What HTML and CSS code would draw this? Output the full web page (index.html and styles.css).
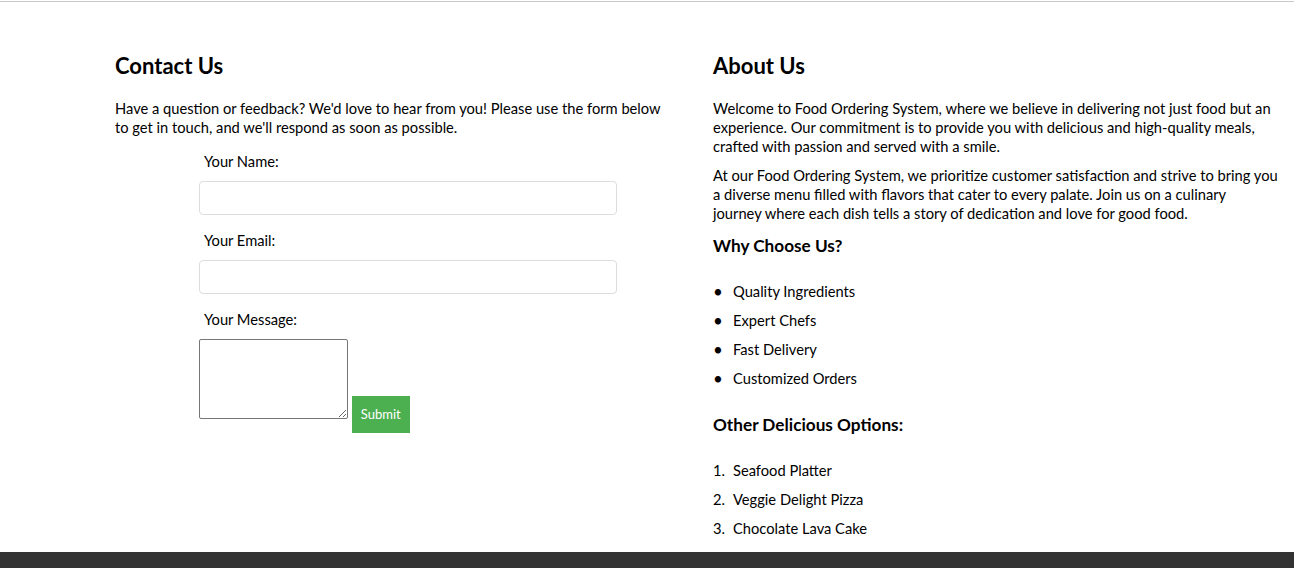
FILE: index.html
```html
<!DOCTYPE html>
<html lang="en">
<head>
<meta charset="utf-8">
<title>Contact &amp; About</title>
<link rel="stylesheet" href="styles.css">
</head>
<body>
<div class="topline"></div>
<main class="page">
  <section class="contact">
    <h2 class="title">Contact Us</h2>
    <p class="text">Have a question or feedback? We'd love to hear from you! Please use the form below to get in touch, and we'll respond as soon as possible.</p>
    <form class="form" onsubmit="return false;">
      <div class="group">
        <label class="label" for="name">Your Name:</label>
        <input class="field" type="text" id="name">
      </div>
      <div class="group">
        <label class="label" for="email">Your Email:</label>
        <input class="field" type="email" id="email">
      </div>
      <div class="group">
        <label class="label" for="msg">Your Message:</label>
        <div class="msgrow"><textarea class="area" id="msg"></textarea> <button class="submit" type="submit">Submit</button></div>
      </div>
    </form>
  </section>
  <section class="about">
    <h2 class="title">About Us</h2>
    <p class="text">Welcome to Food Ordering System, where we believe in delivering not just food but an experience. Our commitment is to provide you with delicious and high-quality meals, crafted with passion and served with a smile.</p>
    <p class="text">At our Food Ordering System, we prioritize customer satisfaction and strive to bring you a diverse menu filled with flavors that cater to every palate. Join us on a culinary<br>journey where each dish tells a story of dedication and love for good food.</p>
    <h3 class="sub">Why Choose Us?</h3>
    <ul class="list bullets">
      <li>Quality Ingredients</li>
      <li>Expert Chefs</li>
      <li>Fast Delivery</li>
      <li>Customized Orders</li>
    </ul>
    <h3 class="sub">Other Delicious Options:</h3>
    <ol class="list numbers">
      <li>Seafood Platter</li>
      <li>Veggie Delight Pizza</li>
      <li>Chocolate Lava Cake</li>
      <li>Refreshing Mocktails</li>
    </ol>
  </section>
</main>
<footer class="footer"></footer>
</body>
</html>
```
FILE: styles.css
```css
html, body {
  margin: 0;
  padding: 0;
  background: #fff;
}
body {
  font-family: Lato, "Open Sans", sans-serif;
  font-size: 14.7px;
  line-height: 19px;
  color: #000;
}
.topline {
  margin-top: 1px;
  border-top: 1px solid #c8c8c8;
}
.page {
  display: grid;
  grid-template-columns: 555px 570px;
  column-gap: 43px;
  padding: 51px 0 40px 115px;
}
.title {
  font-size: 22px;
  line-height: 26px;
  font-weight: 700;
  margin: 0 0 20px;
}
.text {
  margin: 0 0 10px;
}
.contact .text {
  margin-bottom: 15px;
}
.form {
  margin-left: 84px;
  width: 418px;
}
.group {
  margin-bottom: 16px;
}
.label {
  display: block;
  padding-left: 5px;
  margin-bottom: 10px;
}
.field {
  display: block;
  box-sizing: border-box;
  width: 418px;
  height: 34px;
  border: 1px solid #ddd;
  border-radius: 4px;
  padding: 6px 8px;
  font: inherit;
}
.msgrow {
  line-height: 19px;
}
.area {
  box-sizing: border-box;
  width: 149px;
  height: 80px;
  border: 1px solid #767676;
  border-radius: 2px;
  margin: 0;
  vertical-align: baseline;
  font: inherit;
}
.submit {
  background: #4caf50;
  color: #fff;
  border: none;
  padding: 10px 9px;
  height: 37px;
  width: 58px;
  font-family: Lato, sans-serif;
  font-size: 13px;
  line-height: 17px;
  margin: 0;
  cursor: pointer;
}
.sub {
  font-size: 17.2px;
  line-height: 24px;
  font-weight: 700;
  margin: 11px 0 10px;
}
.list {
  margin: 24px 0 25px;
  padding-left: 20px;
  list-style: none;
}
.list li {
  margin-bottom: 10px;
  height: 19px;
}
.list li::before {
  display: inline-block;
  width: 20px;
  margin-left: -20px;
  line-height: 19px;
  vertical-align: top;
}
.bullets li::before {
  content: "\2022";
  font-size: 17px;
}
.numbers {
  counter-reset: item;
}
.numbers li {
  counter-increment: item;
}
.numbers li::before {
  content: counter(item) ".";
}
.footer {
  position: fixed;
  left: 0;
  right: 0;
  bottom: 0;
  height: 16px;
  background: #333;
}
```
